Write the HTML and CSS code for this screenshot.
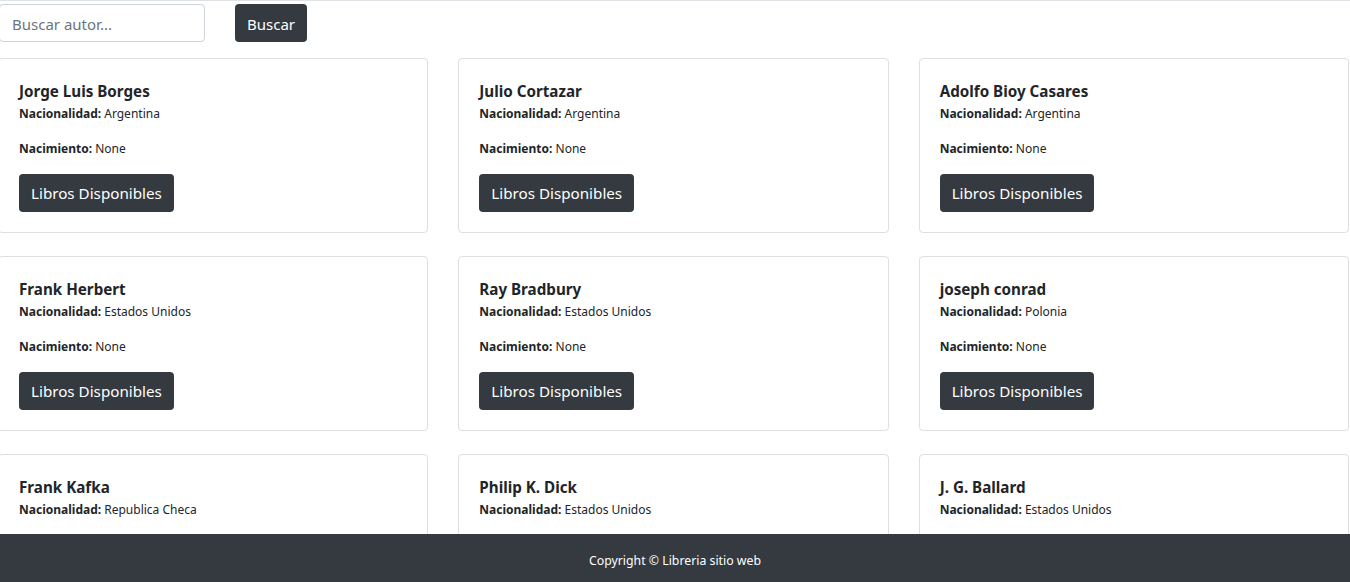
FILE: index.html
```html
<!DOCTYPE html>
<html lang="es">
<head>
<meta charset="utf-8">
<title>Libreria</title>
<link rel="stylesheet" href="styles.css">
</head>
<body>
<div class="page">
  <form class="search">
    <input class="search-input" type="text" placeholder="Buscar autor...">
    <button class="btn btn-search" type="button">Buscar</button>
  </form>
  <div class="grid">
    <div class="card"><h5 class="title">Jorge Luis Borges</h5><p class="info"><b>Nacionalidad:</b> Argentina</p><p class="info"><b>Nacimiento:</b> None</p><button class="btn btn-books" type="button">Libros Disponibles</button></div>
    <div class="card"><h5 class="title">Julio Cortazar</h5><p class="info"><b>Nacionalidad:</b> Argentina</p><p class="info"><b>Nacimiento:</b> None</p><button class="btn btn-books" type="button">Libros Disponibles</button></div>
    <div class="card"><h5 class="title">Adolfo Bioy Casares</h5><p class="info"><b>Nacionalidad:</b> Argentina</p><p class="info"><b>Nacimiento:</b> None</p><button class="btn btn-books" type="button">Libros Disponibles</button></div>
    <div class="card"><h5 class="title">Frank Herbert</h5><p class="info"><b>Nacionalidad:</b> Estados Unidos</p><p class="info"><b>Nacimiento:</b> None</p><button class="btn btn-books" type="button">Libros Disponibles</button></div>
    <div class="card"><h5 class="title">Ray Bradbury</h5><p class="info"><b>Nacionalidad:</b> Estados Unidos</p><p class="info"><b>Nacimiento:</b> None</p><button class="btn btn-books" type="button">Libros Disponibles</button></div>
    <div class="card"><h5 class="title">joseph conrad</h5><p class="info"><b>Nacionalidad:</b> Polonia</p><p class="info"><b>Nacimiento:</b> None</p><button class="btn btn-books" type="button">Libros Disponibles</button></div>
    <div class="card"><h5 class="title">Frank Kafka</h5><p class="info"><b>Nacionalidad:</b> Republica Checa</p><p class="info"><b>Nacimiento:</b> None</p><button class="btn btn-books" type="button">Libros Disponibles</button></div>
    <div class="card"><h5 class="title">Philip K. Dick</h5><p class="info"><b>Nacionalidad:</b> Estados Unidos</p><p class="info"><b>Nacimiento:</b> None</p><button class="btn btn-books" type="button">Libros Disponibles</button></div>
    <div class="card"><h5 class="title">J. G. Ballard</h5><p class="info"><b>Nacionalidad:</b> Estados Unidos</p><p class="info"><b>Nacimiento:</b> None</p><button class="btn btn-books" type="button">Libros Disponibles</button></div>
  </div>
</div>
<footer class="footer">Copyright © Libreria sitio web</footer>
</body>
</html>
```
FILE: styles.css
```css
* { box-sizing: border-box; }
html, body { margin: 0; padding: 0; }
body {
  font-family: "Noto Sans", "Open Sans", "Liberation Sans", sans-serif;
  color: #212529;
  background: #fff;
  border-top: 1px solid #dee2e6;
  overflow: hidden;
}
.page {
  margin-left: -2px;
  width: 1351px;
}
.search {
  display: flex;
  align-items: center;
  gap: 30px;
  margin: 3px 0 16px 1px;
}
.search-input {
  width: 206px;
  height: 38px;
  padding: 7px 12px 5px;
  border: 1px solid #ced4da;
  border-radius: 4px;
  font-family: inherit;
  font-size: 15px;
  color: #495057;
}
.search-input::placeholder { color: #6c757d; }
.btn {
  border: 0;
  border-radius: 4px;
  background: #343a40;
  color: #fff;
  font-family: inherit;
  height: 38px;
  padding: 0 12px;
}
.btn-search { width: 72px; font-size: 15px; padding: 1px 0 0; }
.grid {
  display: grid;
  grid-template-columns: repeat(3, 1fr);
  column-gap: 30px;
  row-gap: 23px;
}
.card {
  border: 1px solid #dfdfdf;
  border-radius: 4px;
  padding: 20px;
  display: flex;
  flex-direction: column;
  align-items: flex-start;
}
.title {
  margin: 0 0 1px;
  font-size: 15.2px;
  line-height: 24px;
  font-weight: 700;
}
.info {
  margin: 0 0 16px;
  font-size: 12px;
  line-height: 19px;
}
.info b { font-weight: 700; }
.btn-books { font-size: 15.2px; padding: 0 12px; }
.footer {
  position: fixed;
  left: 0;
  right: 0;
  bottom: 0;
  height: 48px;
  padding-top: 4px;
  background: #343a40;
  color: #fff;
  font-size: 12.3px;
  display: flex;
  align-items: center;
  justify-content: center;
}
```
